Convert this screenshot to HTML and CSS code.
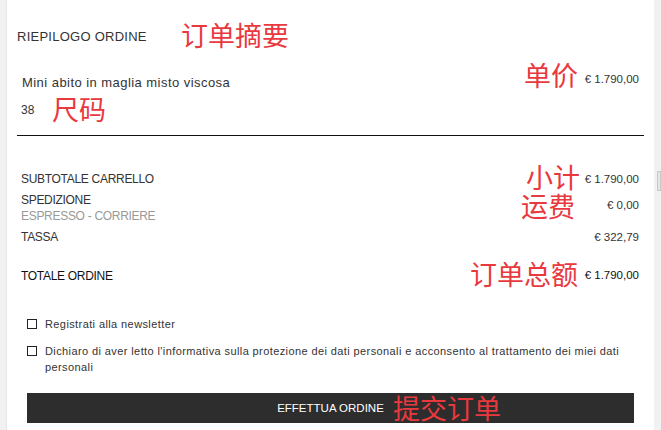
FILE: index.html
```html
<!DOCTYPE html>
<html lang="it">
<head>
    <meta charset="UTF-8">
    <meta name="viewport" content="width=device-width, initial-scale=1.0">
    <title>Riepilogo ordine</title>
    <link rel="stylesheet" href="styles.css">
</head>
<body>
    <div class="page">
        <div class="summary">
            <h2 class="summary-title">RIEPILOGO ORDINE</h2>

            <div class="item">
                <div class="item-info">
                    <div class="item-name">Mini abito in maglia misto viscosa</div>
                    <div class="item-size">38</div>
                </div>
                <div class="item-price">€ 1.790,00</div>
            </div>

            <div class="totals">
                <div class="total-row">
                    <div class="total-label">SUBTOTALE CARRELLO</div>
                    <div class="total-value">€ 1.790,00</div>
                </div>
                <div class="total-row">
                    <div class="total-label">
                        SPEDIZIONE
                        <div class="total-note">ESPRESSO - CORRIERE</div>
                    </div>
                    <div class="total-value shipping">€ 0,00</div>
                </div>
                <div class="total-row">
                    <div class="total-label">TASSA</div>
                    <div class="total-value">€ 322,79</div>
                </div>
                <div class="total-row grand">
                    <div class="total-label">TOTALE ORDINE</div>
                    <div class="total-value">€ 1.790,00</div>
                </div>
            </div>

            <div class="consents">
                <label class="consent">
                    <span class="box"></span>
                    <span>Registrati alla newsletter</span>
                </label>
                <label class="consent">
                    <span class="box"></span>
                    <span>Dichiaro di aver letto l'informativa sulla protezione dei dati personali e acconsento al trattamento dei miei dati personali</span>
                </label>
            </div>

            <button class="place-order">EFFETTUA ORDINE</button>
        </div>

        <div class="rail">
            <div class="thumb"></div>
        </div>

        <!-- note labels -->
        <span class="note note-title">订单摘要</span>
        <span class="note note-unit">单价</span>
        <span class="note note-size">尺码</span>
        <span class="note note-subtotal">小计</span>
        <span class="note note-shipping">运费</span>
        <span class="note note-total">订单总额</span>
        <span class="note note-submit">提交订单</span>
    </div>
</body>
</html>
```

FILE: styles.css
```css
body {
    margin: 0;
    background-color: #f1f1f1;
    font-family: "Liberation Sans", Arial, sans-serif;
    color: #333;
}
.page {
    position: relative;
    display: flex;
    height: 430px;
    overflow: hidden;
}
.summary {
    width: 628px;
    margin-left: 6px;
    padding: 0 10px;
    background-color: #fff;
    border-left: 1px solid #e6e6e6;
}
.summary-title {
    margin: 0;
    padding-top: 29px;
    font-size: 13px;
    font-weight: normal;
    line-height: 16px;
    letter-spacing: 0.25px;
    color: #333;
}
.item {
    display: flex;
    justify-content: space-between;
    margin-top: 30px;
    padding-bottom: 17px;
    border-bottom: 1px solid #111;
}
.item-name {
    padding-left: 5px;
    font-size: 13px;
    line-height: 16px;
    letter-spacing: 0.45px;
}
.item-size {
    margin-top: 11px;
    padding-left: 4px;
    font-size: 12px;
    line-height: 16px;
}
.item-price {
    padding-right: 5px;
    margin-top: -4px;
    font-size: 11.5px;
    line-height: 16px;
}
.totals {
    padding: 35px 5px 0 4px;
}
.total-row {
    display: flex;
    justify-content: space-between;
    margin-bottom: 5px;
    font-size: 12px;
    line-height: 16px;
}
.total-label {
    letter-spacing: -0.3px;
}
.total-note {
    color: #999;
}
.total-value {
    font-size: 11.5px;
}
.total-value.shipping {
    padding-top: 5px;
}
.total-row.grand {
    margin-top: 23px;
    color: #111;
}
.total-row.grand .total-value {
    margin-top: -1px;
    color: #111;
}
.consents {
    margin-top: 32px;
    padding-left: 10px;
}
.consent {
    display: flex;
    gap: 8px;
    margin-bottom: 11px;
    font-size: 11px;
    line-height: 16px;
    letter-spacing: 0.4px;
}
.box {
    flex: none;
    width: 8px;
    height: 8px;
    margin-top: 3px;
    border: 1px solid #222;
}
.place-order {
    display: block;
    width: 607px;
    height: 30px;
    margin: 18px 0 0 10px;
    border: none;
    background-color: #2d2d2d;
    color: #fff;
    font-family: inherit;
    font-size: 11.5px;
}
.rail {
    flex: 1;
    padding-top: 171px;
}
.thumb {
    width: 2px;
    height: 18px;
    margin-left: 3px;
    border: 1px solid #c8c8c8;
    background-color: #e6e6e6;
}
.note {
    position: absolute;
    font-family: "Noto Sans CJK SC", sans-serif;
    font-size: 27px;
    line-height: 25px;
    color: #e8393f;
    white-space: nowrap;
}
.note-title { left: 181px; top: 22px; }
.note-unit { left: 524px; top: 62px; }
.note-size { left: 52px; top: 96px; }
.note-subtotal { left: 526px; top: 164px; }
.note-shipping { left: 521px; top: 193px; }
.note-total { left: 470px; top: 261px; }
.note-submit { left: 393px; top: 395px; }
```
